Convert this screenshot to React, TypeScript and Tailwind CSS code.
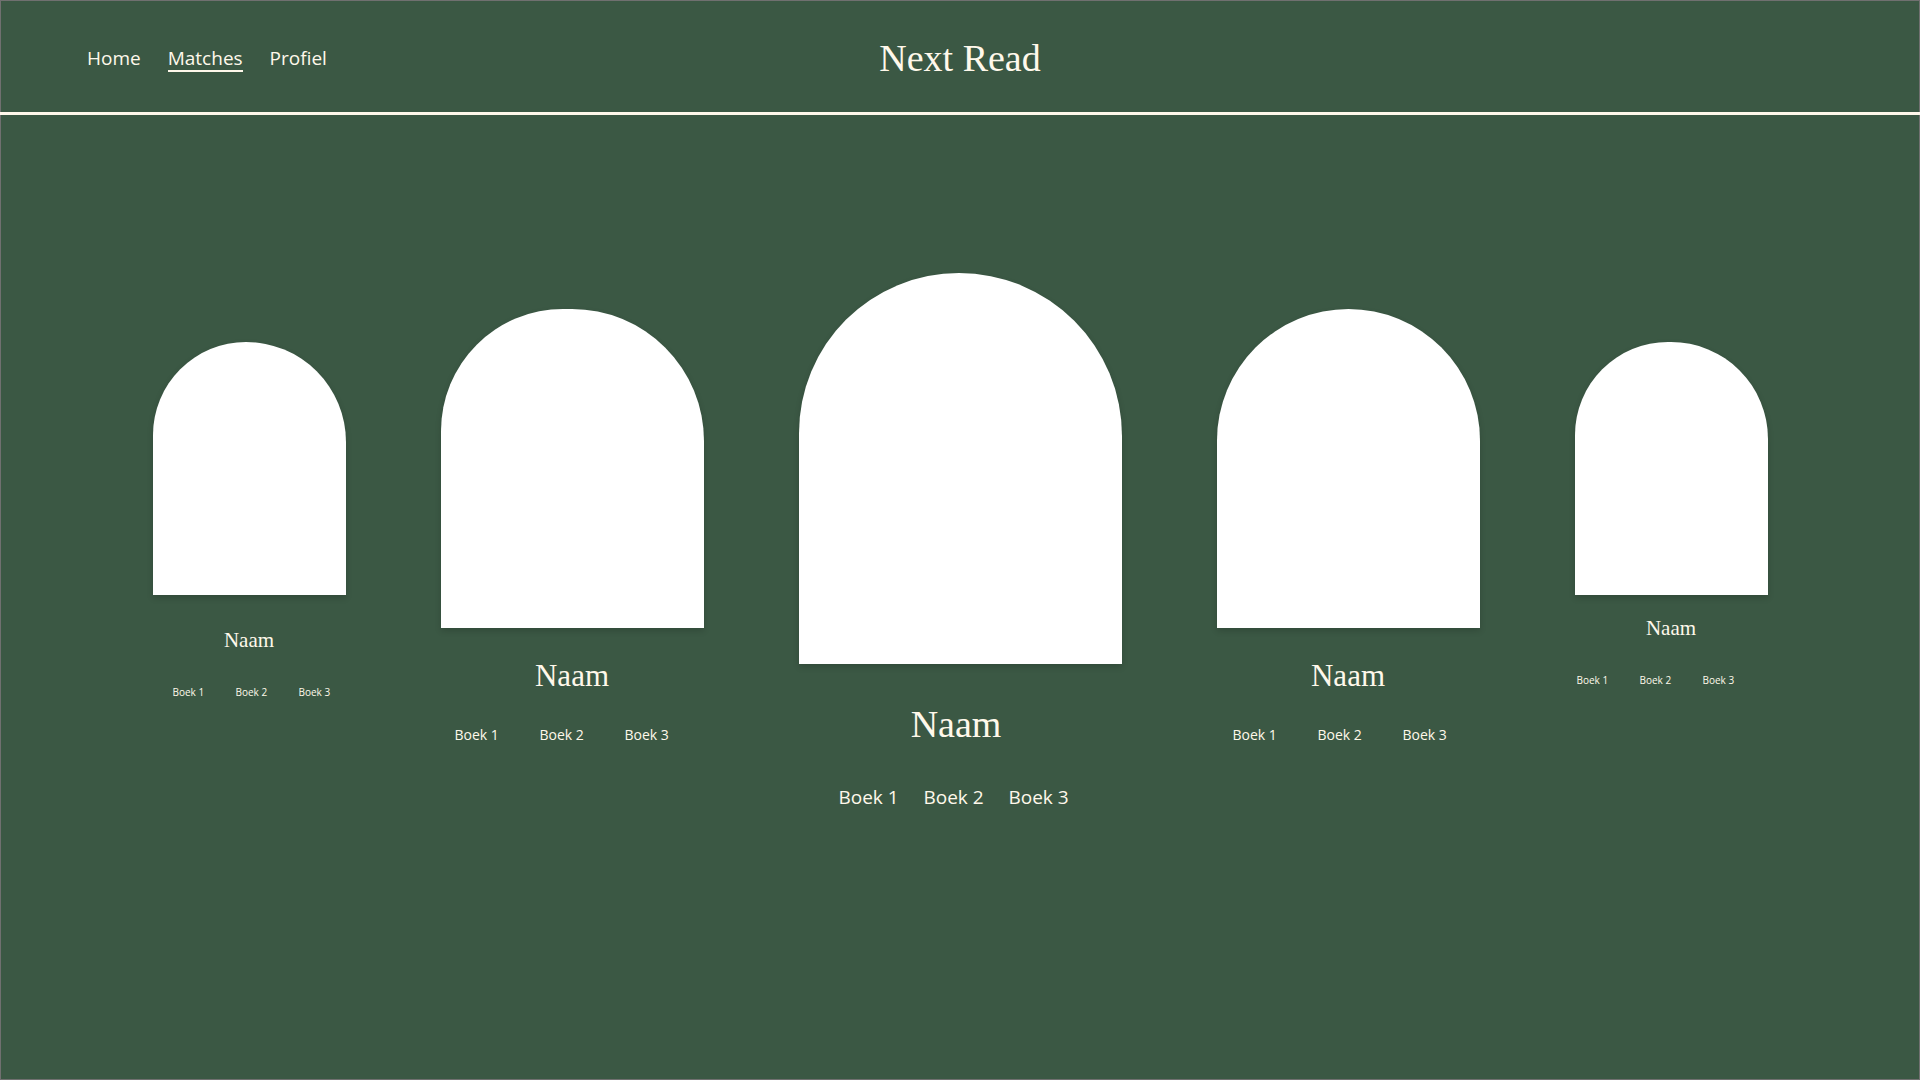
type Match = {
  id: string;
  card: string;
  arch: string;
  name: string;
  books: string;
};

const SMALL_NAME = "text-[21px] leading-6";
const SMALL_BOOKS = "mt-8 grid-cols-[63px_63px_63px] text-[10px] leading-4";
const MEDIUM_NAME = "mt-7 text-[31px] leading-10";
const MEDIUM_BOOKS = "mt-[27px] grid-cols-[85px_85px_85px] text-sm leading-6";

const matches: Match[] = [
  {
    id: "far-left",
    card: "w-[193px] pt-[227px]",
    arch: "h-[253px] rounded-tl-[93px] rounded-tr-[100px]",
    name: `mt-[33px] ${SMALL_NAME}`,
    books: `pl-5 ${SMALL_BOOKS}`,
  },
  {
    id: "left",
    card: "w-[263px] pt-[194px]",
    arch: "h-[319px] rounded-tl-[122px] rounded-tr-[132px]",
    name: MEDIUM_NAME,
    books: `pl-3.5 ${MEDIUM_BOOKS}`,
  },
  {
    id: "center",
    card: "w-[323px] pt-[158px]",
    arch: "h-[391px] rounded-tl-[160px] rounded-tr-[163px]",
    name: "mt-9 pr-2 text-[38px] leading-[48px]",
    books: "mt-[35px] grid-cols-[85px_85px_85px] pl-10 text-[19px] leading-7",
  },
  {
    id: "right",
    card: "w-[263px] pt-[194px]",
    arch: "h-[319px] rounded-t-[132px]",
    name: MEDIUM_NAME,
    books: `pl-4 ${MEDIUM_BOOKS}`,
  },
  {
    id: "far-right",
    card: "w-[193px] pt-[227px]",
    arch: "h-[253px] rounded-tl-[93px] rounded-tr-[97px]",
    name: `mt-[21px] ${SMALL_NAME}`,
    books: `pl-0.5 ${SMALL_BOOKS}`,
  },
];

function MatchCard({ match }: { match: Match }) {
  return (
    <article className={`shrink-0 ${match.card}`}>
      <div className={`bg-white shadow-[0_3px_6px_rgba(0,0,0,0.16)] ${match.arch}`} />
      <h2 className={`text-center font-['Liberation_Serif',serif] ${match.name}`}>Naam</h2>
      <ul className={`grid whitespace-nowrap ${match.books}`}>
        <li>Boek 1</li>
        <li>Boek 2</li>
        <li>Boek 3</li>
      </ul>
    </article>
  );
}

export default function App() {
  return (
    <div className="flex min-h-screen flex-col bg-[#3b5844] font-['Open_Sans',sans-serif] text-[#fff8eb]">
      <header className="border-b-[3px] border-[#fff8eb]">
        <div className="grid h-28 grid-cols-[1fr_auto_1fr] items-center border-x border-t border-[#707070] pt-0.5">
          <nav className="flex gap-[27px] pl-[86px] text-[19px] leading-6">
            <a href="#home">Home</a>
            <a href="#matches" aria-current="page" className="shadow-[0_2px_0_#fff8eb]">
              Matches
            </a>
            <a href="#profiel">Profiel</a>
          </nav>
          <h1 className="font-['Liberation_Serif',serif] text-[38px] leading-[48px]">Next Read</h1>
        </div>
      </header>
      <main className="flex flex-1 items-start justify-center gap-[95px] border-x border-b border-[#707070]">
        {matches.map((match) => (
          <MatchCard key={match.id} match={match} />
        ))}
      </main>
    </div>
  );
}
